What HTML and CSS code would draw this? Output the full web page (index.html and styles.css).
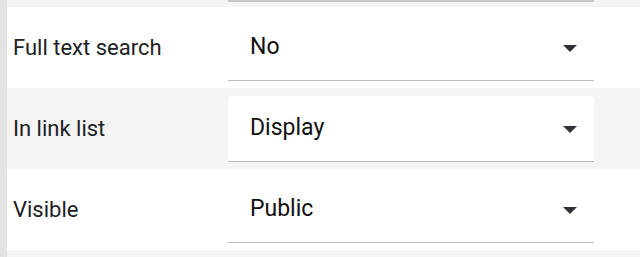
FILE: index.html
```html
<!DOCTYPE html>
<html>
<head>
<meta charset="utf-8">
<link rel="stylesheet" href="styles.css">
</head>
<body>
<div class="panel">
  <div class="row alt stub">
    <div></div>
    <div class="select-stub"></div>
  </div>
  <div class="row">
    <div class="label">Full text search</div>
    <div class="select"><span class="value">No</span><span class="arrow"></span></div>
  </div>
  <div class="row alt">
    <div class="label">In link list</div>
    <div class="select"><span class="value">Display</span><span class="arrow"></span></div>
  </div>
  <div class="row">
    <div class="label">Visible</div>
    <div class="select"><span class="value">Public</span><span class="arrow"></span></div>
  </div>
  <div class="row alt tail"></div>
</div>
</body>
</html>
```
FILE: styles.css
```css
html, body {
  margin: 0;
  padding: 0;
  background: #f4f4f4;
}
.panel {
  border-left: 7px solid #e3e3e3;
  height: 257px;
  overflow: hidden;
  font-family: Roboto, "Liberation Sans", sans-serif;
}
.row {
  display: grid;
  grid-template-columns: 221px 366px;
  height: 81px;
  background: #ffffff;
  align-items: start;
}
.row.alt {
  background: #f4f4f4;
}
.row.stub {
  height: 7px;
}
.row.tail {
  height: 20px;
}
.select-stub {
  height: 0;
  border-bottom: 2px solid #c6c6c6;
}
.label {
  padding-left: 6px;
  height: 81px;
  display: flex;
  align-items: center;
  font-size: 22px;
  color: #202124;
  box-sizing: border-box;
  padding-bottom: 1px;
}
.select {
  margin-top: 8px;
  height: 66px;
  box-sizing: border-box;
  background: #ffffff;
  border-radius: 4px 4px 0 0;
  border-bottom: 1px solid #bdbdbd;
  display: flex;
  align-items: center;
  justify-content: space-between;
  padding: 0 17px 0 22px;
}
.value {
  font-size: 23px;
  color: #111111;
  margin-top: -2px;
}
.arrow {
  width: 0;
  height: 0;
  border-left: 7px solid transparent;
  border-right: 7px solid transparent;
  border-top: 7px solid #303134;
  margin-top: 2px;
}
```
